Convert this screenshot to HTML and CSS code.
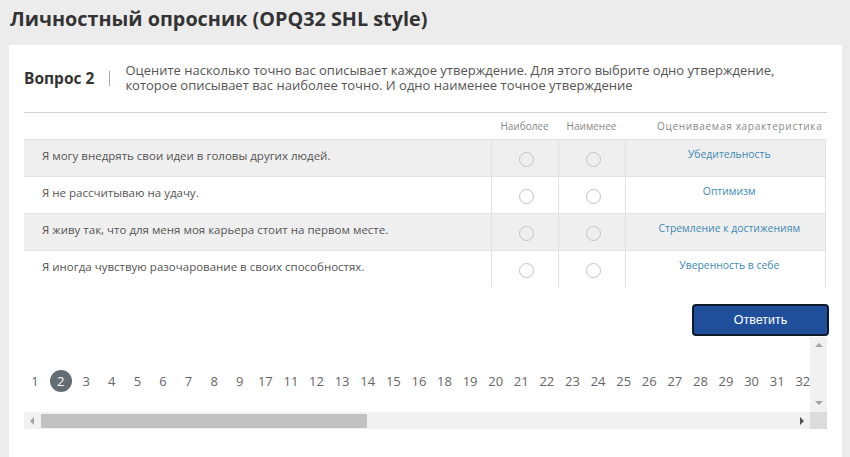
FILE: index.html
```html
<!DOCTYPE html>
<html lang="ru">
<head>
<meta charset="utf-8">
<title>Личностный опросник</title>
<link rel="stylesheet" href="styles.css">
</head>
<body>
<h1 class="page-title">Личностный опросник (OPQ32 SHL style)</h1>
<main class="card">
  <div class="question-head">
    <div class="q-label">Вопрос 2</div>
    <div class="q-sep"></div>
    <div class="q-text">Оцените насколько точно вас описывает каждое утверждение. Для этого выбрите одно утверждение, которое описывает вас наиболее точно. И одно наименее точное утверждение</div>
  </div>
  <table class="qtable">
    <thead>
      <tr>
        <th class="c-text"></th>
        <th class="c-radio">Наиболее</th>
        <th class="c-radio">Наименее</th>
        <th class="c-char">Оцениваемая характеристика</th>
      </tr>
    </thead>
    <tbody>
      <tr class="odd">
        <td class="c-text">Я могу внедрять свои идеи в головы других людей.</td>
        <td class="c-radio"><span class="radio"></span></td>
        <td class="c-radio"><span class="radio"></span></td>
        <td class="c-char">Убедительность</td>
      </tr>
      <tr>
        <td class="c-text">Я не рассчитываю на удачу.</td>
        <td class="c-radio"><span class="radio"></span></td>
        <td class="c-radio"><span class="radio"></span></td>
        <td class="c-char">Оптимизм</td>
      </tr>
      <tr class="odd">
        <td class="c-text">Я живу так, что для меня моя карьера стоит на первом месте.</td>
        <td class="c-radio"><span class="radio"></span></td>
        <td class="c-radio"><span class="radio"></span></td>
        <td class="c-char">Стремление к достижениям</td>
      </tr>
      <tr class="last">
        <td class="c-text">Я иногда чувствую разочарование в своих способностях.</td>
        <td class="c-radio"><span class="radio"></span></td>
        <td class="c-radio"><span class="radio"></span></td>
        <td class="c-char">Уверенность в себе</td>
      </tr>
    </tbody>
  </table>
  <div class="actions">
    <button class="btn-answer" type="button">Ответить</button>
  </div>
  <div class="pager">
    <div class="pager-main">
      <div class="pager-strip">
        <span class="pg">1</span><span class="pg current">2</span><span class="pg">3</span><span class="pg">4</span><span class="pg">5</span><span class="pg">6</span><span class="pg">7</span><span class="pg">8</span><span class="pg">9</span><span class="pg">17</span><span class="pg">11</span><span class="pg">12</span><span class="pg">13</span><span class="pg">14</span><span class="pg">15</span><span class="pg">16</span><span class="pg">18</span><span class="pg">19</span><span class="pg">20</span><span class="pg">21</span><span class="pg">22</span><span class="pg">23</span><span class="pg">24</span><span class="pg">25</span><span class="pg">26</span><span class="pg">27</span><span class="pg">28</span><span class="pg">29</span><span class="pg">30</span><span class="pg">31</span><span class="pg">32</span>
      </div>
      <div class="vscroll">
        <span class="arr arr-up"></span>
        <span class="arr arr-down"></span>
      </div>
    </div>
    <div class="hscroll">
      <div class="htrack">
        <span class="arr arr-left"></span>
        <span class="thumb"></span>
        <span class="arr arr-right"></span>
      </div>
      <div class="corner"></div>
    </div>
  </div>
</main>
</body>
</html>
```

FILE: styles.css
```css
* { box-sizing: border-box; }
html, body { height: 100%; }
body {
  margin: 0;
  background: #ececec;
  font-family: "Open Sans", "Noto Sans", sans-serif;
  color: #555;
  overflow: hidden;
}
.page-title {
  margin: 0;
  padding: 5px 10px 0 10px;
  height: 45px;
  font-size: 19.8px;
  font-weight: 700;
  color: #333;
  line-height: 28px;
}
.card {
  background: #fff;
  margin: 0 8px 0 9px;
  padding: 0 15px 0 15px;
  height: calc(100% - 45px);
}
.question-head {
  display: flex;
  align-items: center;
  height: 68px;
  border-bottom: 1px solid #cfcfcf;
  padding-bottom: 1px;
}
.q-label {
  font-size: 15.5px;
  font-weight: 700;
  color: #333;
}
.q-sep {
  width: 1px;
  height: 15px;
  background: #aaa;
  margin: 0 15px;
}
.q-text {
  font-size: 13px;
  line-height: 15px;
  color: #555;
  max-width: 670px;
}
.qtable {
  width: 802px;
  border-collapse: collapse;
  table-layout: fixed;
  font-size: 11.5px;
}
.qtable th {
  height: 26px;
  font-weight: 400;
  font-size: 10px;
  color: #888;
  text-align: center;
  padding: 0;
}
.qtable th.c-char { padding-left: 29px; letter-spacing: 0.7px; }
.c-text { width: 467px; }
.c-radio { width: 67px; }
.qtable td {
  height: 37px;
  border-top: 1px solid #e2e2e2;
  border-left: 1px solid #e2e2e2;
  padding: 0;
}
.qtable td.c-text {
  border-left: none;
  padding: 0 18px 4px 18px;
  color: #555;
}
.qtable td.c-radio { text-align: center; vertical-align: middle; padding: 2px 0 0 3px; }
.qtable td.c-char {
  text-align: center;
  color: #3d8ab3;
  font-size: 10.4px;
  border-right: 1px solid #e2e2e2;
  padding: 0 0 8px 8px;
}
.qtable tr.odd td { background: #efefef; }
.radio {
  display: inline-block;
  width: 15px;
  height: 15px;
  border: 1px solid #c4c4c4;
  border-radius: 50%;
  vertical-align: middle;
}
.actions {
  display: flex;
  justify-content: flex-end;
  padding-top: 17px;
  margin-right: -2px;
}
.btn-answer {
  width: 137px;
  height: 32px;
  background: #1f4f9b;
  border: 2px solid #0f1a2a;
  border-radius: 4px;
  color: #fff;
  font-family: "Liberation Sans", Arial, sans-serif;
  font-size: 12.5px;
}
.pager {
  width: 803px;
  margin-top: 1px;
}
.pager-main {
  display: flex;
  height: 75px;
}
.pager-strip {
  flex: 1;
  overflow: hidden;
  display: flex;
  align-items: center;
  gap: 3.6px;
  padding-top: 13px;
  white-space: nowrap;
  font-size: 13px;
  color: #666;
}
.pg {
  flex: none;
  width: 22px;
  height: 22px;
  line-height: 22px;
  text-align: center;
  border-radius: 50%;
}
.pg.current {
  background: #646c74;
  color: #fff;
}
.vscroll {
  width: 17px;
  background: #f1f1f1;
  display: flex;
  flex-direction: column;
  justify-content: space-between;
  align-items: center;
  padding: 6px 0 7px;
}
.hscroll {
  display: flex;
  height: 17px;
}
.htrack {
  flex: 1;
  background: #f1f1f1;
  display: flex;
  align-items: center;
  padding: 0 6px;
}
.corner {
  width: 17px;
  background: #dcdcdc;
}
.thumb {
  width: 326px;
  height: 14px;
  background: #c1c1c1;
  margin-left: 7px;
}
.arr {
  display: block;
  width: 0;
  height: 0;
}
.arr-up {
  border-left: 4px solid transparent;
  border-right: 4px solid transparent;
  border-bottom: 4px solid #a3a3a3;
}
.arr-down {
  border-left: 4px solid transparent;
  border-right: 4px solid transparent;
  border-top: 4px solid #a3a3a3;
}
.arr-left {
  border-top: 4px solid transparent;
  border-bottom: 4px solid transparent;
  border-right: 4px solid #a3a3a3;
}
.arr-right {
  margin-left: auto;
  border-top: 4px solid transparent;
  border-bottom: 4px solid transparent;
  border-left: 4px solid #505050;
}
```
